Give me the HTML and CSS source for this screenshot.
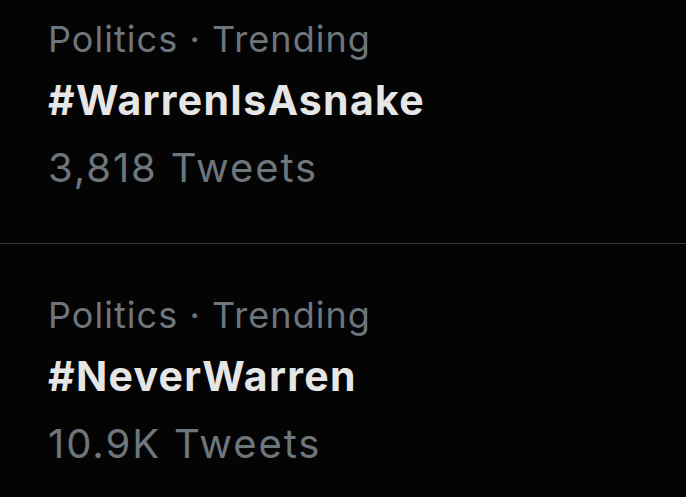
FILE: index.html
```html
<!DOCTYPE html>
<html>
<head>
<meta charset="utf-8">
<link rel="stylesheet" href="styles.css">
</head>
<body>
<div class="list">
  <div class="trend first">
    <div class="meta">Politics · Trending</div>
    <div class="tag">#WarrenIsAsnake</div>
    <div class="count">3,818 Tweets</div>
  </div>
  <div class="divider"></div>
  <div class="trend second">
    <div class="meta">Politics · Trending</div>
    <div class="tag">#NeverWarren</div>
    <div class="count">10.9K Tweets</div>
  </div>
</div>
</body>
</html>
```
FILE: styles.css
```css
html, body {
  margin: 0;
  padding: 0;
  background: #040404;
  width: 686px;
  height: 497px;
  overflow: hidden;
}
.list {
  font-family: Inter, "Noto Sans", sans-serif;
}
.trend {
  padding-left: 48px;
  display: flex;
  flex-direction: column;
  white-space: nowrap;
}
.first {
  padding-top: 17px;
  padding-bottom: 47px;
}
.second {
  padding-top: 49px;
}
.meta {
  color: #6e767d;
  font-size: 36px;
  letter-spacing: 1.05px;
  line-height: 44px;
  height: 44px;
}
.tag {
  color: #e6e6e6;
  font-size: 41px;
  font-weight: 700;
  letter-spacing: 1.3px;
  line-height: 78px;
  height: 78px;
}
.count {
  color: #6e767d;
  font-size: 40px;
  letter-spacing: 1.9px;
  line-height: 57px;
  height: 57px;
}
.divider {
  height: 1px;
  background: #36393c;
}
```
